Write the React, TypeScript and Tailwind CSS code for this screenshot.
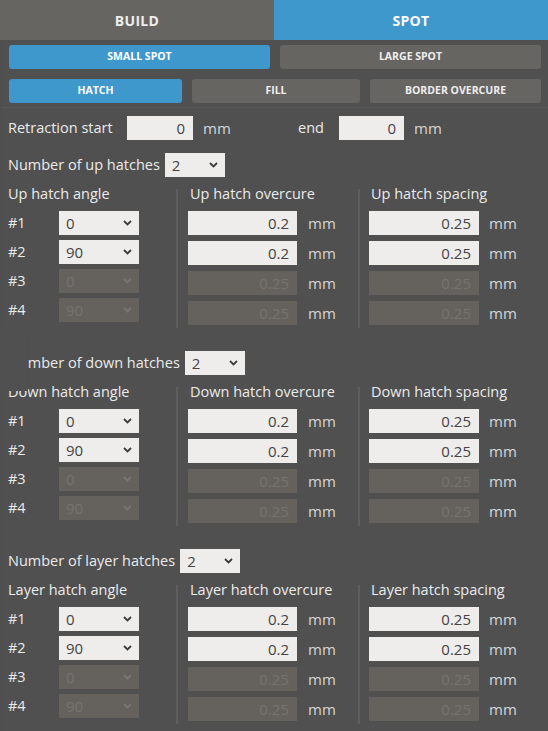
import React from 'react';

const font = "font-['Open_Sans','Noto_Sans',sans-serif]";

const Chevron = ({ disabled }: { disabled?: boolean }) => (
  <svg width="9" height="6" viewBox="0 0 9 6" className="shrink-0">
    <polyline
      points="1,1 4.5,4.5 8,1"
      fill="none"
      stroke={disabled ? '#7a7672' : '#3c3c3c'}
      strokeWidth="1.8"
    />
  </svg>
);

const Select = ({ value, width, disabled }: { value: string; width: string; disabled?: boolean }) => (
  <div
    className={`flex h-[24px] items-center justify-between pl-[7px] pr-[7px] text-[15px] ${width} ${
      disabled ? 'bg-[#65615d] text-[#77736f]' : 'bg-[#eeedeb] text-[#444444]'
    }`}
  >
    <span>{value}</span>
    <Chevron disabled={disabled} />
  </div>
);

const NumInput = ({ value, width, disabled }: { value: string; width: string; disabled?: boolean }) => (
  <div
    className={`flex h-[24px] items-center justify-end pr-[8px] text-[15px] ${width} ${
      disabled ? 'bg-[#65615d] text-[#77736f]' : 'bg-[#eeedeb] text-[#444444]'
    }`}
  >
    {value}
  </div>
);

const rows = [
  { angle: '0', over: '0.2', spacing: '0.25', disabled: false },
  { angle: '90', over: '0.2', spacing: '0.25', disabled: false },
  { angle: '0', over: '0.25', spacing: '0.25', disabled: true },
  { angle: '90', over: '0.25', spacing: '0.25', disabled: true },
];

const HatchSection = ({ name, prefix }: { name: string; prefix: string }) => (
  <div className="flex flex-col">
    <div className="flex h-[24px] items-center">
      <span className="text-[14.5px] text-[#ebebeb]">{`Number of ${name} hatches`}</span>
      <div className="ml-[5px]">
        <Select value="2" width="w-[60px]" />
      </div>
    </div>
    <div className="mt-[7px] flex">
      {/* angle column */}
      <div className="flex w-[168px] flex-col">
        <div className="h-[20px] text-[14.5px] leading-[20px] text-[#ebebeb]">{`${prefix} hatch angle`}</div>
        <div className="mt-[7px] flex flex-col gap-[5px]">
          {rows.map((r, i) => (
            <div key={i} className="flex h-[24px] items-center">
              <span className="w-[51px] text-[14.5px] text-[#ebebeb]">{`#${i + 1}`}</span>
              <Select value={r.angle} width="w-[80px]" disabled={r.disabled} />
            </div>
          ))}
        </div>
      </div>
      <div className="mt-[5px] h-[139px] w-[2px] bg-[#5e5e5e]" />
      {/* overcure column */}
      <div className="flex w-[180px] flex-col pl-[10px]">
        <div className="h-[20px] pl-[2px] text-[14.5px] leading-[20px] text-[#ebebeb]">{`${prefix} hatch overcure`}</div>
        <div className="mt-[7px] flex flex-col gap-[6px]">
          {rows.map((r, i) => (
            <div key={i} className="flex h-[24px] items-center">
              <NumInput value={r.over} width="w-[109px]" disabled={r.disabled} />
              <span className="ml-[11px] text-[15px] text-[#d6d6d6]">mm</span>
            </div>
          ))}
        </div>
      </div>
      <div className="mt-[5px] h-[139px] w-[2px] bg-[#5e5e5e]" />
      {/* spacing column */}
      <div className="flex flex-1 flex-col pl-[9px]">
        <div className="h-[20px] pl-[2px] text-[14.5px] leading-[20px] text-[#ebebeb]">{`${prefix} hatch spacing`}</div>
        <div className="mt-[7px] flex flex-col gap-[6px]">
          {rows.map((r, i) => (
            <div key={i} className="flex h-[24px] items-center">
              <NumInput value={r.spacing} width="w-[110px]" disabled={r.disabled} />
              <span className="ml-[10px] text-[15px] text-[#d6d6d6]">mm</span>
            </div>
          ))}
        </div>
      </div>
    </div>
  </div>
);

export default function App() {
  return (
    <div className={`relative h-[731px] w-[548px] overflow-hidden bg-[#505050] ${font}`}>
      <div className="grid h-[40px] grid-cols-2 text-[14px] font-bold tracking-[0.3px]">
        <div className="flex items-center justify-center bg-[#676561] text-[#eeeeee]">BUILD</div>
        <div className="flex items-center justify-center bg-[#3f98cc] text-white">SPOT</div>
      </div>

      <div className="ml-px border-l border-[#46505a] pb-[20px]">
        <div className="border-b border-[#585858] pl-[7px] pr-[7px] pt-[5px] pb-[4px] text-[10.5px] font-bold text-white">
          <div className="grid h-[24px] grid-cols-2 gap-[10px]">
            <div className="flex items-center justify-center rounded-[3px] bg-[#3f98cc]">SMALL SPOT</div>
            <div className="flex items-center justify-center rounded-[3px] bg-[#676561] text-[#eeeeee]">LARGE SPOT</div>
          </div>
          <div className="mt-[10px] grid h-[24px] grid-cols-[173px_168px_1fr] gap-[10px]">
            <div className="flex items-center justify-center rounded-[3px] bg-[#3f98cc]">HATCH</div>
            <div className="flex items-center justify-center rounded-[3px] bg-[#676561] text-[#eeeeee]">FILL</div>
            <div className="flex items-center justify-center rounded-[3px] bg-[#676561] text-[#eeeeee]">BORDER OVERCURE</div>
          </div>
        </div>

        <div className="flex flex-col pl-[6px]">
          <div className="mt-[8px] flex h-[24px] items-center text-[14.5px]">
            <span className="w-[119px] text-[#ebebeb]">Retraction start</span>
            <NumInput value="0" width="w-[66px]" />
            <span className="ml-[10px] w-[95px] text-[15px] text-[#d6d6d6]">mm</span>
            <span className="w-[41px] text-[#ebebeb]">end</span>
            <NumInput value="0" width="w-[65px]" />
            <span className="ml-[10px] text-[15px] text-[#d6d6d6]">mm</span>
          </div>

          <div className="mt-[13px] flex flex-col gap-[23px]">
            <HatchSection name="up" prefix="Up" />
            <HatchSection name="down" prefix="Down" />
            <HatchSection name="layer" prefix="Layer" />
          </div>
        </div>
      </div>

      {/* leftover panel edge drawn over the down hatches label */}
      <div className="absolute left-0 top-[330px] h-[61px] w-[28px] border-r border-[#46505a] bg-[#505050]" />
    </div>
  );
}
